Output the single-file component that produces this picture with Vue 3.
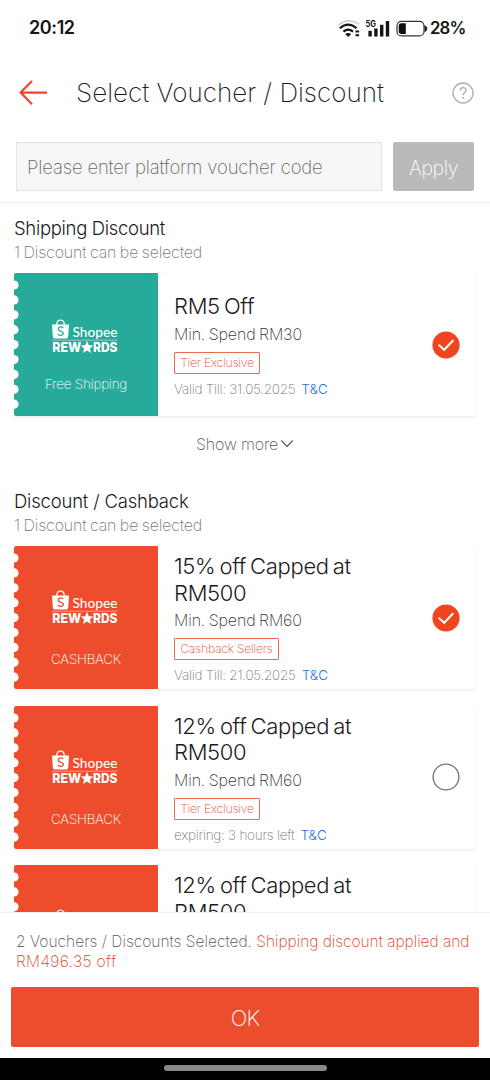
<script setup>
const sections = [
  {
    id: 'shipping',
    title: 'Shipping Discount',
    more: true,
    cards: [
      { tone: 'teal', label: 'Free Shipping', title: ['RM5 Off'], min: 'Min. Spend RM30', tag: 'Tier Exclusive', valid: 'Valid Till: 31.05.2025', on: true },
    ],
  },
  {
    id: 'cashback',
    title: 'Discount / Cashback',
    more: false,
    cards: [
      { tone: 'red', label: 'CASHBACK', title: ['15% off Capped at', 'RM500'], min: 'Min. Spend RM60', tag: 'Cashback Sellers', valid: 'Valid Till: 21.05.2025', on: true },
      { tone: 'red', label: 'CASHBACK', title: ['12% off Capped at', 'RM500'], min: 'Min. Spend RM60', tag: 'Tier Exclusive', valid: 'expiring: 3 hours left', on: false },
      { tone: 'red', label: '', title: ['12% off Capped at', 'RM500'], min: '', tag: '', valid: '', on: false, peek: true },
    ],
  },
]
</script>

<template>
  <div class="screen">
    <div class="status">
      <span class="time">20:12</span>
      <svg class="sys" width="92" height="24" viewBox="0 0 92 24">
        <g fill="none">
          <path d="M1.200 9.200Q11.500 .8 22 8.200" stroke="#c8c8c8" stroke-width="1.500" />
          <path d="M2.800 12.200Q11.200 5 19.600 12.200" stroke="#151515" stroke-width="2.100" />
          <path d="M6.400 15.600Q11.200 11.600 16 15.600" stroke="#151515" stroke-width="2.100" />
        </g>
        <path d="M8.200 18Q11.200 15.800 14.200 18L11.200 21Z" fill="#151515" />
        <path d="M18.500 15.600h3.600M18.500 19.300h3.600" stroke="#151515" stroke-width="2" />
        <g fill="#151515">
          <text x="28.500" y="11.200" class="net" textLength="10.500" lengthAdjust="spacingAndGlyphs">5G</text>
          <rect x="31.400" y="14.800" width="3.400" height="5.700" />
          <rect x="37.200" y="12.500" width="3.400" height="8" />
          <rect x="43" y="8.800" width="3.400" height="11.700" />
          <rect x="48.800" y="5" width="3.400" height="15.500" />
        </g>
        <rect x="60" y="5.300" width="27" height="14.600" rx="4.500" fill="none" stroke="#333" stroke-width="1.200" />
        <path d="M64 7.200h4.800v10.800H64a2.500 2.500 0 0 1-2.300-2.500V9.700a2.500 2.500 0 0 1 2.300-2.500Z" fill="#111" />
        <path d="M87.500 9q2.800 1 2.800 3.600t-2.800 3.600Z" fill="#222" />
      </svg>
      <span class="pct">28%</span>
    </div>

    <header class="header">
      <svg class="back" width="30" height="28" viewBox="0 0 30 28">
        <path d="M29 13.600H2.600M14 2L2.600 13.600L14 25.200" fill="none" stroke="#f0442a" stroke-width="2.200" />
      </svg>
      <h1>Select Voucher / Discount</h1>
      <svg class="help" width="24" height="24" viewBox="0 0 24 24">
        <circle cx="12" cy="12" r="10" fill="none" stroke="#b0b0b0" stroke-width="1.400" />
        <path d="M9.200 9.500Q9.300 6.700 12.200 6.700Q15 6.800 15 9.300Q15 10.700 13.500 11.800Q12.200 12.700 12.200 14.200" fill="none" stroke="#aaa" stroke-width="1.300" />
        <circle cx="12.200" cy="16.800" r=".9" fill="#aaa" />
      </svg>
    </header>

    <div class="entry">
      <div class="field"><span>Please enter platform voucher code</span></div>
      <div class="apply"><span>Apply</span></div>
    </div>

    <main class="list">
      <section v-for="s in sections" :key="s.id" class="section">
        <h2 :class="s.id">{{ s.title }}</h2>
        <p class="sub">1 Discount can be selected</p>
        <article v-for="(c, i) in s.cards" :key="i" class="card" :class="{ peek: c.peek }">
          <div class="stub" :class="c.tone">
            <svg class="edge" width="6" height="143" viewBox="0 0 6 143">
              <circle v-for="n in 9" :key="n" cx="0" :cy="12 + (n - 1) * 14.900" r="4.600" fill="#fff" />
            </svg>
            <svg class="brand" width="66" height="36" viewBox="0 0 66 36">
              <path d="M4.800 6V4.800Q5.200 1.100 8.500 1.100T12.300 4.800V6" fill="none" stroke="#fff" stroke-width="1.300" />
              <path d="M0 5.400H17L16.200 17.700Q16 19.400 14.400 19.400H2.600Q1 19.400 .8 17.700Z" fill="#fff" />
              <path class="bag-s" d="M11.400 8.800Q8.700 7.200 6.700 8.600Q5 10.900 8.600 12.100Q12.200 13.200 11 15.400Q8.900 17.500 5.700 15.200" fill="none" stroke-width="1.300" />
              <path d="M0 21.200H65.500" stroke="#fff" stroke-opacity=".65" stroke-width=".7" />
              <g v-if="!c.peek">
                <text x="20.500" y="18" class="name" textLength="45" lengthAdjust="spacingAndGlyphs">Shopee</text>
                <text x=".3" y="33" class="rew" textLength="29" lengthAdjust="spacingAndGlyphs">REW</text>
                <text x="41" y="33" class="rew" textLength="24.500" lengthAdjust="spacingAndGlyphs">RDS</text>
              </g>
              <path d="M35 21.800L36.800 26.200L41.300 26.500L37.900 29.500L39 34L35 31.600L31 34L32.100 29.500L28.700 26.500L33.200 26.200Z" fill="#fff" />
            </svg>
            <span class="label">{{ c.label }}</span>
          </div>
          <div class="info">
            <h3><span v-for="t in c.title" :key="t">{{ t }}</span></h3>
            <template v-if="!c.peek">
              <p class="min">{{ c.min }}</p>
              <span class="tag">{{ c.tag }}</span>
              <p class="valid"><span class="when">{{ c.valid }}</span><span class="tc">T&amp;C</span></p>
            </template>
          </div>
          <svg class="radio" width="28" height="28" viewBox="0 0 28 28">
            <template v-if="c.on">
              <circle cx="14" cy="14" r="13.600" fill="#f1441f" />
              <path d="M6.600 13.800L12.200 18.800L21.300 9.200" fill="none" stroke="#fff" stroke-width="2" />
            </template>
            <circle v-else cx="14" cy="14" r="12.900" fill="#fff" stroke="#777" stroke-width="1.400" />
          </svg>
        </article>
        <div v-if="s.more" class="more">
          <span>Show more</span>
          <svg width="14" height="10" viewBox="0 0 14 10"><path d="M1.300 1.500L7 7.500L12.700 1.500" fill="none" stroke="#666" stroke-width="1.300" /></svg>
        </div>
      </section>
    </main>

    <footer class="footer">
      <p class="sum"><span class="picked">2 Vouchers / Discounts Selected.</span> <span class="gain">Shipping discount applied and</span><br /><span class="gain amount">RM496.35 off</span></p>
      <div class="ok">OK</div>
    </footer>
    <div class="nav"><i></i></div>
  </div>
</template>

<style>
body { margin: 0; background: #fff; }
</style>

<style scoped>
.screen { width: 490px; height: 1080px; display: flex; flex-direction: column; overflow: hidden; background: #fff; font-family: Inter, "Liberation Sans", sans-serif; font-weight: 250; color: #1c1c1c; white-space: nowrap; }
h1, h2, h3, p { margin: 0; font-weight: 250; }
svg { display: block; flex: none; overflow: visible; }
.status { height: 55px; flex: none; display: flex; align-items: center; box-sizing: border-box; padding: 0 24px 0 29px; }
.time { font-size: 18px; font-weight: 600; letter-spacing: -.4px; color: #151515; }
.sys { margin-left: auto; }
.pct { width: 36px; margin-left: 1px; font-size: 16.800px; font-weight: 600; letter-spacing: -.9px; color: #151515; }
.net { font: 700 8.500px Inter, sans-serif; }
.header { height: 75px; flex: none; display: flex; align-items: center; padding: 0 15px 0 18px; }
h1 { margin-left: 28px; font-size: 26px; line-height: 36px; letter-spacing: 0; }
.help { margin-left: auto; }
.entry { height: 73px; flex: none; display: flex; gap: 11px; padding: 12px 16px 0; box-sizing: border-box; border-bottom: 1px solid #f0f0f0; }
.field { width: 366px; height: 49px; box-sizing: border-box; border: 1px solid #e3e3e3; background: #f6f6f6; display: flex; align-items: center; padding: 1px 0 0 10px; font-size: 18.500px; letter-spacing: -.16px; color: #666; }
.apply { width: 81px; height: 49px; border-radius: 2px; background: #bababa; color: #fff; display: flex; align-items: center; justify-content: center; padding-top: 2px; box-sizing: border-box; font-size: 19.500px; letter-spacing: -.4px; }
.list { flex: 1; min-height: 0; overflow: hidden; padding: 13px 14px 0; }
.section { height: 273px; }
h2 { font-size: 18.500px; line-height: 25px; font-weight: 300; letter-spacing: -.2px; }
h2.shipping { letter-spacing: -.32px; }
.sub { font-size: 16px; line-height: 22px; letter-spacing: -.19px; word-spacing: -.7px; color: #777; margin-bottom: 10px; }
.card { height: 143px; width: 462px; display: flex; align-items: center; box-shadow: 0 1px 3px rgba(0,0,0,.09); margin-bottom: 16.500px; }
.stub { width: 144px; height: 143px; position: relative; display: flex; flex-direction: column; align-items: center; border-radius: 2px 0 0 2px; color: #fff; }
.teal { background: #27aa9a; --tone: #27aa9a; }
.red { background: #ee4d2d; --tone: #ee4d2d; }
.edge { position: absolute; left: 0; top: 0; }
.brand { margin-top: 46px; margin-left: -2px; }
.red .brand { margin-top: 44px; }
.peek .radio { display: none; }
.peek .info { align-self: flex-start; padding-top: 5px; }
.bag-s { stroke: var(--tone); }
.name { font: 500 14px Lato, sans-serif; fill: #fff; }
.rew { font: 800 13.500px Inter, sans-serif; fill: #fff; }
.label { margin-top: 19px; font-size: 13.500px; line-height: 20px; letter-spacing: -.25px; }
.red .label { margin-top: 23px; letter-spacing: -.3px; }
.info { width: 244px; padding-left: 16px; display: flex; flex-direction: column; align-items: flex-start; }
h3 { font-size: 22px; line-height: 26.500px; padding-top: 2px; display: flex; flex-direction: column; font-weight: 300; letter-spacing: -.32px; word-spacing: -1.800px; }
.min { font-size: 16px; line-height: 22px; margin-top: 3px; letter-spacing: -.16px; word-spacing: -.7px; color: #333; }
.tag { height: 22px; box-sizing: border-box; border: 1px solid #ee6a55; border-radius: 1px; color: #ea4a32; font-size: 12.300px; line-height: 20px; letter-spacing: -.3px; padding: 0 5.200px; margin-top: 7px; }
.valid { font-size: 13.500px; line-height: 18px; margin-top: 6px; letter-spacing: -.25px; color: #777; display: flex; gap: 6px; }
.tc { color: #2673dd; font-weight: 300; letter-spacing: 0; }
.radio { margin-left: 14px; }
.more { display: flex; align-items: center; justify-content: center; gap: 2px; font-size: 16px; line-height: 24px; margin-top: -1px; letter-spacing: -.2px; color: #555; }
.footer { height: 146px; flex: none; box-sizing: border-box; border-top: 1px solid #eee; padding: 19px 11px 0; }
.sum { padding-left: 5px; font-size: 15.500px; line-height: 19.500px; letter-spacing: .02px; color: #555; }
.gain { color: #e03d25; letter-spacing: -.03px; }
.amount { letter-spacing: .4px; }
.ok { height: 60px; margin-top: 16px; padding-top: 2px; box-sizing: border-box; border-radius: 2px; background: #ee4d2d; color: #fff; display: flex; align-items: center; justify-content: center; font-size: 22px; letter-spacing: -.8px; }
.nav { height: 22px; flex: none; background: #000; display: flex; align-items: center; justify-content: center; }
.nav i { width: 163px; height: 6px; margin-top: -2px; border-radius: 3px; background: #888; }
</style>
